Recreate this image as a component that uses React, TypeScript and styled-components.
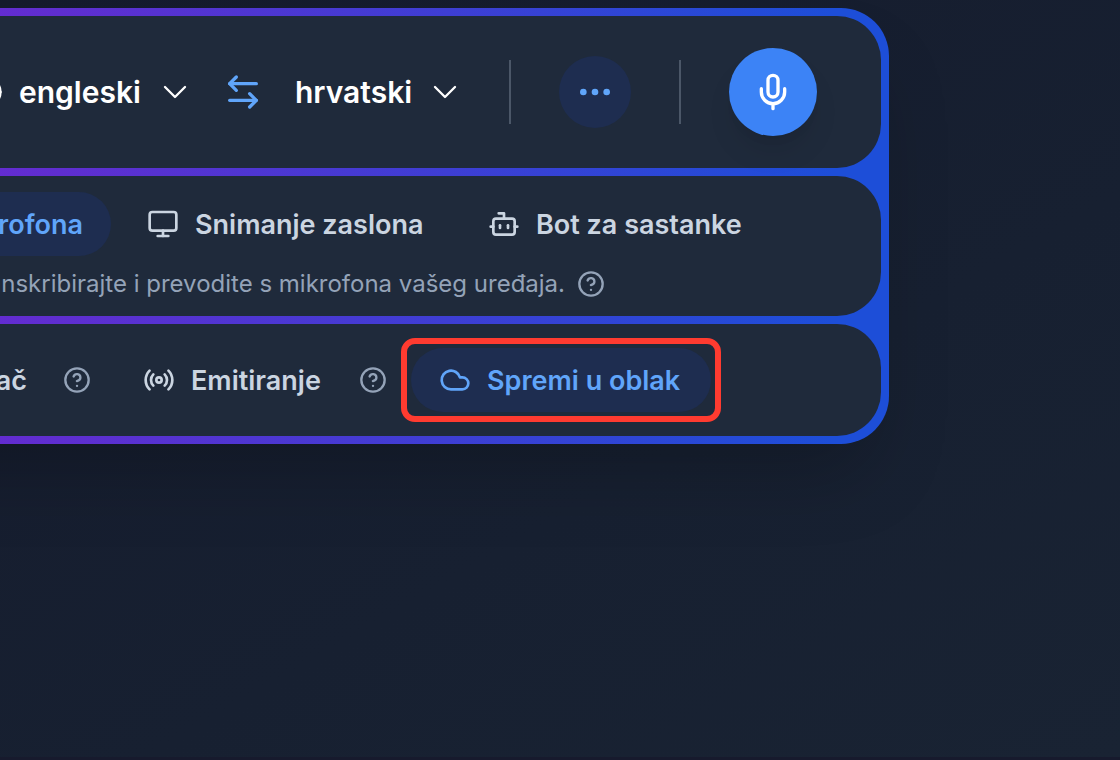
import React from "react";
import styled, { createGlobalStyle, css } from "styled-components";
import { ArrowLeftRight, Bot, Cloud, Ellipsis, Globe, Mic, Monitor, Radio } from "lucide-react";

const GlobalStyle = createGlobalStyle`
  * { box-sizing: border-box; }
  body {
    margin: 0;
    background: #171f30;
    font-family: Inter, "Liberation Sans", sans-serif;
  }
  button, select { font: inherit; color: inherit; margin: 0; border: 0; background: none; padding: 0; }
  button { cursor: pointer; }
  svg { display: block; flex: none; }
`;

const Page = styled.main`
  min-height: 100vh;
  padding-top: 8px;
  overflow: hidden;
  background: linear-gradient(150deg, #151b2d 0%, #172031 60%, #192333 100%);
  border-bottom: 3px solid #171a2d;
`;

const Panel = styled.div`
  display: flex;
  flex-direction: column;
  gap: 8px;
  margin: 0 231px 0 -240px;
  padding: 8px;
  border-radius: 48px;
  background: linear-gradient(90deg, #7325d2 0%, #5f2ed0 300px, #1d4ed8 95%);
  box-shadow: 0 44px 80px -24px rgba(0, 0, 0, 0.25);
`;

const Section = styled.section<{ $inset: number }>`
  display: flex;
  align-items: center;
  justify-content: flex-end;
  padding: 16px ${(p) => p.$inset}px 16px 0;
  border-radius: 44px;
  background: #1f2a3b;
  white-space: nowrap;
`;

const Languages = styled(Section)`
  height: 152px;
  gap: 48px;
  color: #ffffff;
`;

const Modes = styled(Section)`
  height: 140px;
  flex-direction: column;
  align-items: flex-end;
  justify-content: flex-start;
  gap: 12px;
`;

const Options = styled(Section)`
  height: 112px;
  gap: 24px;
`;

const Pair = styled.div`
  display: flex;
  align-items: center;
  gap: 32px;
`;

const Picker = styled.label`
  position: relative;
  display: flex;
  align-items: center;
  gap: 16px;

  > svg:last-child {
    position: absolute;
    right: 0;
    pointer-events: none;
  }
`;

const Select = styled.select<{ $min: number }>`
  appearance: none;
  field-sizing: content;
  min-width: ${(p) => p.$min}px;
  height: 48px;
  padding-right: 48px;
  font-size: 30px;
  font-weight: 600;
  outline: 0;

  option { color: #1f2a3b; }
`;

const IconButton = styled.button`
  color: #60a5fa;
`;

const Divider = styled.span`
  width: 2px;
  height: 64px;
  background: #4b5768;
`;

const RoundButton = styled.button<{ $primary?: boolean }>`
  display: grid;
  place-items: center;
  width: ${(p) => (p.$primary ? 88 : 72)}px;
  height: ${(p) => (p.$primary ? 88 : 72)}px;
  border-radius: 50%;
  color: ${(p) => (p.$primary ? "#ffffff" : "#60a5fa")};
  background: ${(p) => (p.$primary ? "#3c83f6" : "#1e2d50")};
  box-shadow: ${(p) => (p.$primary ? "0 20px 30px -6px rgba(0, 0, 0, 0.1), 0 8px 12px -8px rgba(0, 0, 0, 0.1)" : "none")};
`;

const Row = styled.div<{ $gap: number }>`
  display: flex;
  align-items: center;
  gap: ${(p) => p.$gap}px;
`;

const ModeRow = styled(Row)`
  margin-right: 109px;
`;

const Caption = styled(Row)`
  margin-right: 276px;
  font-size: 24px;
  line-height: 32px;
  color: #94a3b8;

  p { margin: 0; }
`;

const Pill = styled.button<{ $min?: number; $active?: boolean; $marked?: boolean }>`
  position: relative;
  display: flex;
  align-items: center;
  gap: 16px;
  min-width: ${(p) => p.$min ?? 0}px;
  height: 64px;
  padding: 0 28px;
  border-radius: 32px;
  font-size: 27px;
  font-weight: 600;
  color: ${(p) => (p.$active ? "#60a5fa" : "#cbd5e1")};
  background: ${(p) => (p.$active ? "#1e2d50" : "transparent")};

  ${(p) =>
    p.$marked &&
    css`
      &::after {
        content: "";
        position: absolute;
        inset: -10px;
        border: 6px solid #ff3b30;
        border-radius: 14px;
        pointer-events: none;
      }
    `}
`;

const HelpButton = styled.button`
  color: #94a3b8;
`;

function Chevron() {
  return (
    <svg width="32" height="32" viewBox="0 0 24 24" fill="none" stroke="currentColor" strokeWidth="1.75" strokeLinecap="round" strokeLinejoin="round">
      <path d="m19.5 8.25-7.5 7.5-7.5-7.5" />
    </svg>
  );
}

function Help({ label }: { label: string }) {
  return (
    <HelpButton type="button" aria-label={label}>
      <svg width="28" height="28" viewBox="0 0 24 24" fill="none" stroke="currentColor" strokeWidth="2" strokeLinecap="round" strokeLinejoin="round">
        <circle cx="12" cy="12" r="10" />
        <path d="M9.09 9a3 3 0 0 1 5.83 1c0 2-3 3-3 3" />
        <path d="M12 17h.01" />
      </svg>
    </HelpButton>
  );
}

export default function App() {
  return (
    <>
      <GlobalStyle />
      <Page>
        <Panel>
          <Languages $inset={64}>
            <Pair>
              <Picker>
                <Globe size={32} />
                <Select $min={172} aria-label="Izvorni jezik" defaultValue="en">
                  <option value="en">engleski</option>
                </Select>
                <Chevron />
              </Picker>
              <IconButton type="button" aria-label="Zamijeni jezike">
                <ArrowLeftRight size={40} />
              </IconButton>
              <Picker>
                <Select $min={166} aria-label="Ciljni jezik" defaultValue="hr">
                  <option value="hr">hrvatski</option>
                </Select>
                <Chevron />
              </Picker>
            </Pair>
            <Divider />
            <RoundButton type="button" aria-label="Više">
              <Ellipsis size={40} />
            </RoundButton>
            <Divider />
            <RoundButton type="button" $primary aria-label="Snimaj">
              <Mic size={40} />
            </RoundButton>
          </Languages>

          <Modes $inset={0}>
            <ModeRow $gap={8}>
              <Pill type="button" $active>
                <Mic size={32} />
                Snimanje mikrofona
              </Pill>
              <Pill type="button" $min={333}>
                <Monitor size={32} />
                Snimanje zaslona
              </Pill>
              <Pill type="button" $min={312}>
                <Bot size={32} />
                Bot za sastanke
              </Pill>
            </ModeRow>
            <Caption $gap={12}>
              <p>Transkribirajte i prevodite s mikrofona vašeg uređaja.</p>
              <Help label="Pomoć za mikrofon" />
            </Caption>
          </Modes>

          <Options $inset={170}>
            <Row $gap={8}>
              <Pill type="button">Tumač</Pill>
              <Help label="Pomoć za tumača" />
            </Row>
            <Row $gap={8}>
              <Pill type="button" $min={236}>
                <Radio size={32} />
                Emitiranje
              </Pill>
              <Help label="Pomoć za emitiranje" />
            </Row>
            <Pill type="button" $min={300} $active $marked>
              <Cloud size={32} />
              Spremi u oblak
            </Pill>
          </Options>
        </Panel>
      </Page>
    </>
  );
}
